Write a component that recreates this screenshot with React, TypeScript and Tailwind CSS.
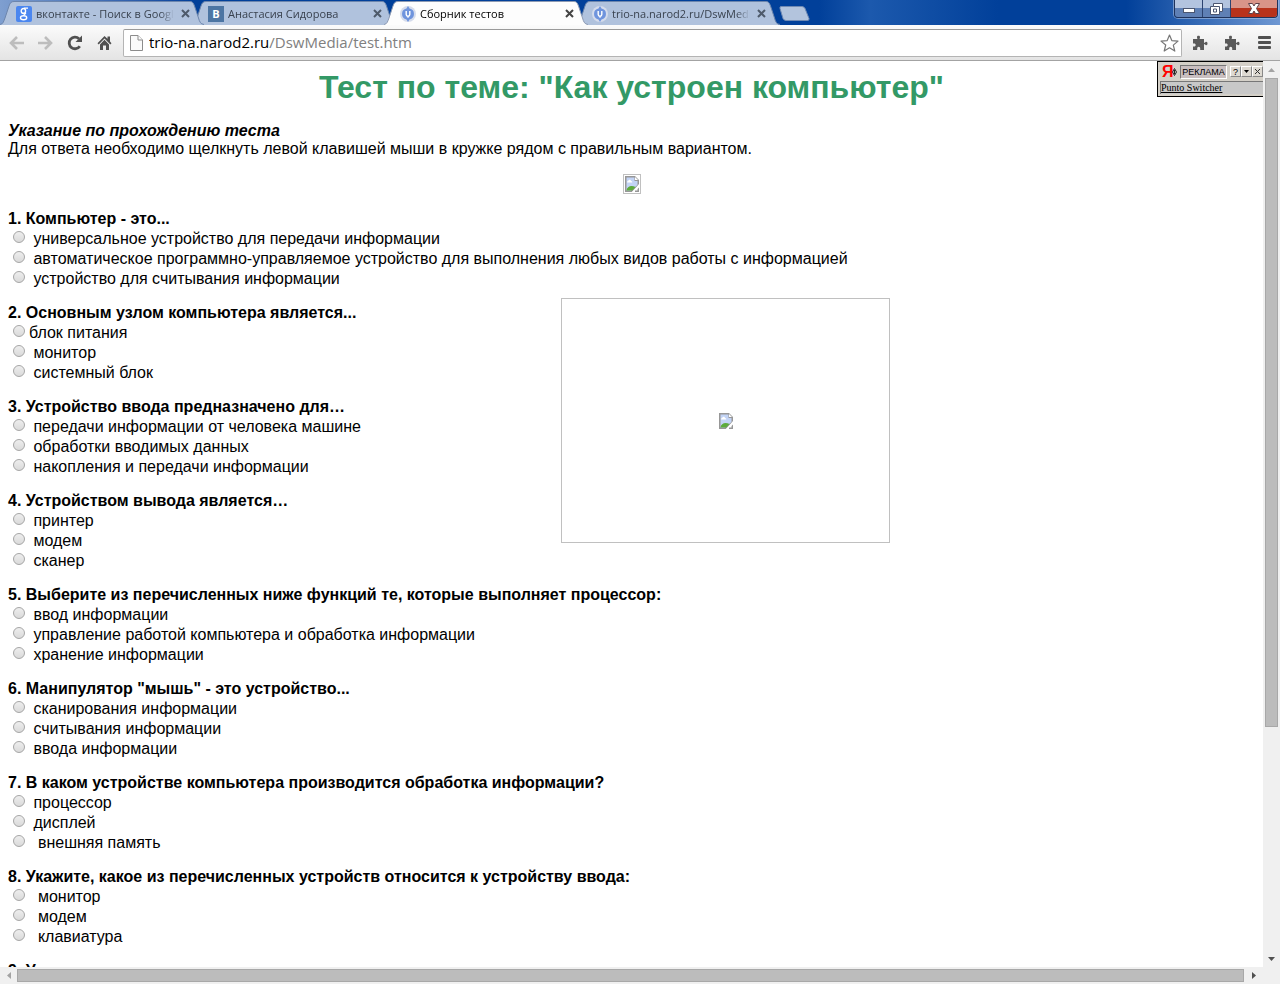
import { useState } from "react";

type Tab = {
  title: string;
  icon: "google" | "vk" | "ucoz";
  active?: boolean;
};

type Question = {
  title: string;
  options: string[];
};

const tabs: Tab[] = [
  { title: "вконтакте - Поиск в Google", icon: "google" },
  { title: "Анастасия Сидорова", icon: "vk" },
  { title: "Сборник тестов", icon: "ucoz", active: true },
  { title: "trio-na.narod2.ru/DswMedia", icon: "ucoz" },
];

// leading non-breaking spaces are part of the page's own markup
const questions: Question[] = [
  {
    title: "1. Компьютер - это...",
    options: [
      "\u00a0универсальное устройство для передачи информации",
      "\u00a0автоматическое программно-управляемое устройство для выполнения любых видов работы с информацией",
      "\u00a0устройство для считывания информации",
    ],
  },
  {
    title: "2. Основным узлом компьютера является...",
    options: ["блок питания", "\u00a0монитор", "\u00a0системный блок"],
  },
  {
    title: "3. Устройство ввода предназначено для…",
    options: [
      "\u00a0передачи информации от человека машине",
      "\u00a0обработки вводимых данных",
      "\u00a0накопления и передачи информации",
    ],
  },
  {
    title: "4. Устройством вывода является…",
    options: ["\u00a0принтер", "\u00a0модем", "\u00a0сканер"],
  },
  {
    title: "5. Выберите из перечисленных ниже функций те, которые выполняет процессор:",
    options: [
      "\u00a0ввод информации",
      "\u00a0управление работой компьютера и обработка информации",
      "\u00a0хранение информации",
    ],
  },
  {
    title: '6. Манипулятор "мышь" - это устройство...',
    options: [
      "\u00a0сканирования информации",
      "\u00a0считывания информации",
      "\u00a0ввода информации",
    ],
  },
  {
    title: "7. В каком устройстве компьютера производится обработка информации?",
    options: ["\u00a0процессор", "\u00a0дисплей", "\u00a0\u00a0внешняя память"],
  },
  {
    title: "8. Укажите, какое из перечисленных устройств относится к устройству ввода:",
    options: ["\u00a0\u00a0монитор", "\u00a0\u00a0модем", "\u00a0\u00a0клавиатура"],
  },
  { title: "9. У", options: [] },
];

function TabIcon({ icon }: { icon: Tab["icon"] }) {
  if (icon === "google") {
    return (
      <span className="flex h-4 w-4 shrink-0 items-center justify-center rounded-xs bg-[#4a86f0]">
        <svg width="10" height="14" viewBox="0 0 10 14" fill="none" stroke="#fff">
          <ellipse cx="4.4" cy="3.9" rx="2.2" ry="2.4" strokeWidth="1.4" />
          <path d="M5 1.200h4M6.200 5.500c1.800 1.600-2.200 1.800-1.400 3.200" strokeWidth="1.200" />
          <ellipse cx="4.6" cy="10.700" rx="3.100" ry="2" strokeWidth="1.400" />
        </svg>
      </span>
    );
  }
  if (icon === "vk") {
    return (
      <span className="flex h-4 w-4 shrink-0 items-center justify-center bg-[#4c75a3] font-['Open_Sans',sans-serif] text-[11px] leading-4 font-bold text-white">
        B
      </span>
    );
  }
  return (
    <svg className="h-4 w-4 shrink-0" viewBox="0 0 16 16">
      <circle cx="8" cy="8" r="8" fill="#d5dcec" />
      <path d="M8 0l1.500 2.600a5.500 5.500 0 0 1 0 10.800L8 16l-1.500-2.600a5.500 5.500 0 0 1 0-10.800z" fill="#6f94dd" />
      <path d="M6.200 5v3.500a1.800 1.800 0 0 0 3.600 0V5" fill="none" stroke="#fff" strokeWidth="1.400" />
      <path d="M8 10v2" stroke="#fff" strokeWidth="1" />
    </svg>
  );
}

function BrowserTab({ tab, order }: { tab: Tab; order: number }) {
  const fill = tab.active ? "#fdfdfd" : "#b0c2dd";
  const line = tab.active ? "#8e9bb3" : "#6d86ad";

  return (
    <div className="relative -mr-3 flex h-6 w-51 shrink-0" style={{ zIndex: order }}>
      <svg width="14" height="24" viewBox="0 0 14 24" className="shrink-0">
        <path d="M0 24C3 23 3.500 21 5 17L9 5C10 2 11 .5 14 .5V24z" fill={fill} />
        <path d="M0 23.500C3 23 3.500 21 5 17L9 5C10 2 11 .5 14 .5" fill="none" stroke={line} />
      </svg>
      <div
        className={`flex min-w-0 flex-1 items-center border-t pl-0.5 ${
          tab.active ? "border-[#8e9bb3] bg-[#fdfdfd]" : "border-[#6d86ad] bg-[#b0c2dd]"
        }`}
      >
        <TabIcon icon={tab.icon} />
        <span
          className={`ml-1 w-[138px] shrink-0 overflow-hidden mask-r-from-90% font-['Open_Sans',sans-serif] text-[11px] leading-4 whitespace-nowrap ${
            tab.active ? "text-black" : "text-[#39424f]"
          }`}
        >
          {tab.title}
        </span>
        <button aria-label="Закрыть вкладку" className="ml-[7px] shrink-0">
          <svg width="9" height="9" viewBox="0 0 9 9" stroke={tab.active ? "#444" : "#4e5a6b"} strokeWidth="2">
            <path d="M1 1l7 7M8 1L1 8" />
          </svg>
        </button>
      </div>
      <svg width="14" height="24" viewBox="0 0 14 24" className="shrink-0">
        <path d="M0 .5C2.500 .5 3.500 2 4.500 5L8.500 17c1.200 4 2 6 5.500 7H0z" fill={fill} />
        <path d="M0 .5C2.500 .5 3.500 2 4.500 5L8.500 17c1.200 4 2 6 5.500 6.500" fill="none" stroke={line} />
      </svg>
    </div>
  );
}

function WindowControls() {
  return (
    <div className="mr-0.5 ml-auto flex h-[18px] overflow-hidden rounded-b border border-t-0 border-[#1f335c] ring-1 ring-[#a9bedf]/60">
      <button
        aria-label="Свернуть"
        className="flex w-7 items-center justify-center border-r border-[#2c4370] bg-linear-to-b from-[#b3c4df] from-45% to-[#5f80b5] to-50% pt-1"
      >
        <svg width="12" height="5" viewBox="0 0 12 5">
          <rect x=".5" y=".5" width="11" height="4" fill="#fff" stroke="#4b5670" />
        </svg>
      </button>
      <button
        aria-label="Восстановить"
        className="flex w-7 items-center justify-center border-r border-[#2c4370] bg-linear-to-b from-[#b3c4df] from-45% to-[#5f80b5] to-50%"
      >
        <svg width="13" height="12" viewBox="0 0 13 12">
          <path d="M3.500.5h9v8h-3v3h-9v-8h3z" fill="#fff" stroke="#4b5670" />
          <path d="M3.500 3.500h6v5M3.500 6h3v3h-3z" fill="none" stroke="#4b5670" />
        </svg>
      </button>
      <button
        aria-label="Закрыть"
        className="flex w-[46px] items-center justify-center bg-linear-to-b from-[#d99488] from-45% to-[#b8321b] to-50%"
      >
        <svg width="12" height="11" viewBox="0 0 12 11">
          <path d="M.5.5h4L6 3 7.500.5h4L8.500 5.500l3 5h-4L6 8l-1.500 2.500h-4l3-5z" fill="#fff" stroke="#5d4048" />
        </svg>
      </button>
    </div>
  );
}

function PuzzleIcon() {
  return (
    <svg width="16" height="16" viewBox="0 0 16 16" fill="#595959">
      <path d="M1 4h4.300C5.500 3.500 5 3 5 2.200 5 1.300 5.600.8 6.500.8S8 1.300 8 2.200C8 3 7.500 3.500 7.700 4H12v3.800h1c.2-.6.600-1 1.200-1 .8 0 1.300.7 1.300 1.700s-.5 1.700-1.300 1.700c-.6 0-1-.4-1.200-1h-1V15H8.200v-1.500c0-1-.6-1.700-1.500-1.700s-1.500.7-1.500 1.700V15H1v-3.500h1.200c.9 0 1.500-.6 1.500-1.500S3.100 8.500 2.200 8.500H1z" />
    </svg>
  );
}

function Toolbar() {
  return (
    <div className="flex h-9 shrink-0 items-center border-b border-[#a3a3a3] bg-linear-to-b from-[#fbfbfb] to-[#e4e4e4] pr-[9px] pl-[9px]">
      <button aria-label="Назад" className="mr-3.5">
        <svg width="15" height="14" viewBox="0 0 15 14" fill="none" stroke="#bdbdbd" strokeWidth="2.600">
          <path d="M8 1L2 7l6 6M2 7h13" />
        </svg>
      </button>
      <button aria-label="Вперёд" className="mr-3.5">
        <svg width="15" height="14" viewBox="0 0 15 14" fill="none" stroke="#bdbdbd" strokeWidth="2.600">
          <path d="M7 1l6 6-6 6M13 7H0" />
        </svg>
      </button>
      <button aria-label="Обновить" className="mr-3.5">
        <svg width="16" height="16" viewBox="0 0 16 16">
          <path d="M12.800 11.200A5.800 5.800 0 1 1 12 3.700" fill="none" stroke="#505050" strokeWidth="2.800" />
          <path d="M15 .5V7H8.500z" fill="#505050" />
        </svg>
      </button>
      <button aria-label="Домой" className="mr-2.5">
        <svg width="16" height="16" viewBox="0 0 16 16" fill="#505050">
          <path d="M7.500 1L.5 8.200l1.200 1.200 5.800-6 5.800 6 1.200-1.200L13 6.500V1.500h-2.500v2.300z" />
          <path d="M7.500 4.800L3 9.500V15h3v-4.500h3V15h3V9.500z" />
        </svg>
      </button>

      <div className="flex h-7 min-w-0 flex-1 items-center rounded-xs border border-[#b4b4b4] border-t-[#9a9a9a] bg-white px-1.5">
        <svg width="13" height="16" viewBox="0 0 13 16" className="shrink-0" fill="#fafafa" stroke="#8c8c8c">
          <path d="M.5.5H8L12.500 5v10.500H.5z" />
          <path d="M8 .5V5h4.500" />
        </svg>
        <p className="ml-1.5 flex-1 overflow-hidden pb-0.5 font-['Open_Sans',sans-serif] text-[15px] leading-6 whitespace-nowrap text-[#808080]">
          <span className="text-black">trio-na.narod2.ru</span>/DswMedia/test.htm
        </p>
        <button aria-label="Добавить в закладки" className="-mr-1">
          <svg width="19" height="18" viewBox="0 0 19 18" fill="#fff" stroke="#777" strokeWidth="1.200" strokeLinejoin="round">
            <path d="M9.500 1l2.300 5.600 6.200.5-4.700 4 1.500 6-5.300-3.300L4.200 17l1.500-6L1 7.100l6.200-.5z" />
          </svg>
        </button>
      </div>

      <button aria-label="Расширение" className="ml-2.5">
        <PuzzleIcon />
      </button>
      <button aria-label="Расширение" className="ml-4">
        <PuzzleIcon />
      </button>
      <button aria-label="Меню" className="ml-[18px]">
        <svg width="13" height="13" viewBox="0 0 13 13" fill="#505050">
          <rect width="13" height="3" rx="1" />
          <rect y="5" width="13" height="3" rx="1" />
          <rect y="10" width="13" height="3" rx="1" />
        </svg>
      </button>
    </div>
  );
}

function BrokenImage() {
  return (
    <svg width="14" height="16" viewBox="0 0 14 16">
      <path d="M0 0h10l4 4v5L7 16H0z" fill="#979797" />
      <path d="M1.500 1.500h8v3.500h3v4L6 14.500H1.500z" fill="#c3d4f6" />
      <path d="M2 6.500c0-1.500 1.500-1.500 2-2.500 1-.8 2 0 2 1 1.500 0 1.500 1.500 1 1.500z" fill="#fff" />
      <path d="M1.500 14.500c.5-4 4.500-5.500 9-3.500L7 14.500z" fill="#5dab3c" />
      <path d="M10 1v3h3z" fill="#fff" />
      <path d="M14 8l-7 8h3l4-4z" fill="#fff" />
      <path d="M14 11.500V16h-4v-1.500h2.500V13z" fill="#979797" />
    </svg>
  );
}

const adButton =
  "flex h-[11px] w-[11px] items-center justify-center border border-[#888] border-t-white border-l-white bg-[#dedad2] font-['Liberation_Sans',sans-serif] text-[9px] leading-2";

function AdBox() {
  return (
    <div className="absolute top-0 right-0 w-[106px] border-y border-l border-black bg-[#d4d0c8] pl-0.5">
      <div className="flex h-[19px] items-center">
        <span className="w-3 pl-0.5 font-['Liberation_Sans',sans-serif] text-base leading-4 font-bold text-[#f00]">
          Я
        </span>
        <svg width="5" height="8" viewBox="0 0 5 8" fill="none" stroke="#222" className="shrink-0">
          <path d="M2.500 .5L4.500 4 2.500 7.500.5 4zM2.500 2v4" />
        </svg>
        <span className="ml-[3px] flex h-3.5 w-12 items-center justify-center border border-t-[#777] border-r-white border-b-white border-l-[#777] bg-[#c9bfc0] font-['Liberation_Sans',sans-serif] text-[9px] leading-3 text-black">
          РЕКЛАМА
        </span>
        <div className="ml-[3px] flex">
          <button aria-label="Справка" className={adButton}>
            ?
          </button>
          <button aria-label="Свернуть рекламу" className={adButton}>
            <svg width="5" height="3" viewBox="0 0 5 3">
              <path d="M0 0h5L2.500 3z" />
            </svg>
          </button>
          <button aria-label="Закрыть рекламу" className={adButton}>
            <svg width="5" height="5" viewBox="0 0 5 5" stroke="#333">
              <path d="M0 0l5 5M5 0L0 5" />
            </svg>
          </button>
        </div>
      </div>
      <div className="mb-0.5 h-[13px] border-t border-l border-[#777] bg-[#c8c8c8] font-['Liberation_Serif',serif] text-[10px] leading-3">
        <a href="#punto" className="text-black underline">
          Punto Switcher
        </a>
      </div>
    </div>
  );
}

function Quiz() {
  const [answers, setAnswers] = useState<Record<number, number>>({});

  return (
    <form>
      {questions.map((question, q) => (
        <fieldset key={question.title} className="mb-[15px]">
          <legend className="pb-px leading-[18px] font-bold">{question.title}</legend>
          {question.options.map((option, i) => (
            <label key={option} className="flex h-5 items-center whitespace-nowrap">
              <input
                type="radio"
                name={`q${q}`}
                checked={answers[q] === i}
                onChange={() => setAnswers({ ...answers, [q]: i })}
                className="mr-1 mb-1 ml-[5px] h-3 w-3 appearance-none rounded-full border border-[#a6a6a6] bg-linear-to-b from-[#eee] to-[#dadada] checked:border-[#555] checked:bg-[#777]"
              />
              <span>{option}</span>
            </label>
          ))}
        </fieldset>
      ))}
    </form>
  );
}

export default function App() {
  return (
    <div className="flex h-screen flex-col overflow-hidden bg-white">
      {/* TAB STRIP */}
      <div className="flex h-[25px] shrink-0 bg-linear-to-r from-[#7f9fd0] via-[#01409a] via-15% to-[#01409a]">
        <div className="flex h-full w-full bg-linear-to-r from-transparent from-64% via-[#1c59ad] via-68% to-transparent to-78%">
          <div className="flex h-full w-full bg-linear-to-r from-transparent from-88% to-[#6f98d3]">
            <div className="flex items-end">
              {tabs.map((tab, i) => (
                <BrowserTab
                  key={tab.title}
                  tab={tab}
                  order={tab.active ? 10 : tabs.length - i}
                />
              ))}
              <button aria-label="Новая вкладка" className="mb-1 ml-[11px]">
                <svg width="32" height="15" viewBox="0 0 32 15">
                  <path d="M2 .5h21q2 0 3 2l4 10q.500 2-1.500 2H7q-2 0-3-2L1 2.500Q.5.5 2 .5z" fill="#b3c4dd" stroke="#708ab3" />
                </svg>
              </button>
            </div>
            <WindowControls />
          </div>
        </div>
      </div>

      <Toolbar />

      <div className="flex min-h-0 flex-1">
        {/* PAGE */}
        <main className="relative min-w-0 flex-1 overflow-hidden px-2 pt-2 font-['Liberation_Sans',sans-serif] text-base text-black">
          <h1 className="text-center text-[32px] leading-9 font-bold text-[#339966]">
            Тест по теме: "Как устроен компьютер"
          </h1>
          <p className="mt-[17px] leading-[18px] font-bold italic">Указание по прохождению теста</p>
          <p className="leading-[18px]">
            Для ответа необходимо щелкнуть левой клавишей мыши в кружке рядом с правильным вариантом.
          </p>
          <div className="my-4 flex justify-center">
            <div className="border border-[#c0c0c0] p-px">
              <BrokenImage />
            </div>
          </div>

          <Quiz />

          {/* floating picture that failed to load */}
          <div className="absolute top-[237px] left-[561px] flex h-[245px] w-[329px] items-center justify-center border border-[#c0c0c0]">
            <BrokenImage />
          </div>
          <AdBox />
        </main>

        {/* VERTICAL SCROLLBAR */}
        <div className="flex w-[17px] shrink-0 flex-col items-center bg-[#f0f0f0]">
          <div className="flex h-[17px] items-center">
            <svg width="7" height="4" viewBox="0 0 7 4" fill="#a3a3a3">
              <path d="M0 4h7L3.500 0z" />
            </svg>
          </div>
          <div className="w-[13px] flex-[648] border border-[#a8a8a8] bg-[#bcbcbc]" />
          <div className="flex-[224]" />
          <div className="flex h-[17px] items-center">
            <svg width="7" height="4" viewBox="0 0 7 4" fill="#505050">
              <path d="M0 0h7L3.500 4z" />
            </svg>
          </div>
        </div>
      </div>

      {/* HORIZONTAL SCROLLBAR */}
      <div className="flex h-[17px] shrink-0 items-center bg-[#f0f0f0] pr-[17px]">
        <div className="flex w-[17px] justify-center">
          <svg width="4" height="7" viewBox="0 0 4 7" fill="#a3a3a3">
            <path d="M4 0v7L0 3.500z" />
          </svg>
        </div>
        <div className="h-[13px] flex-1 border border-[#a8a8a8] bg-[#bcbcbc]" />
        <div className="flex w-[19px] justify-center">
          <svg width="4" height="7" viewBox="0 0 4 7" fill="#505050">
            <path d="M0 0v7l4-3.500z" />
          </svg>
        </div>
      </div>
    </div>
  );
}
